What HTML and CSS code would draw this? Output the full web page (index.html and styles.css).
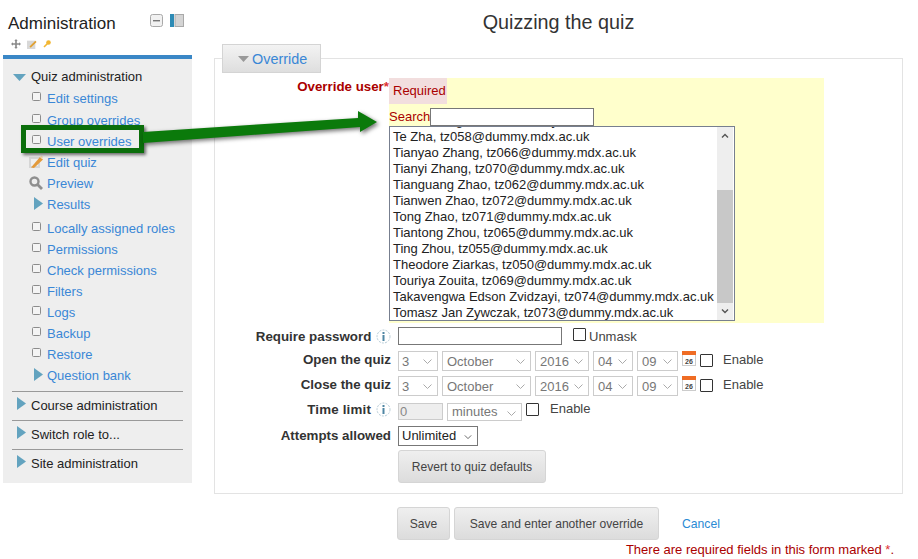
FILE: index.html
```html
<!DOCTYPE html>
<html lang="en">
<head>
<meta charset="utf-8">
<title>Quizzing the quiz</title>
<link rel="stylesheet" href="styles.css">
</head>
<body>
<svg width="0" height="0" class="defs">
  <defs>
    <symbol id="sq" viewBox="0 0 9 9"><rect x=".5" y=".5" width="8" height="8" rx="1" fill="#f4f4f4" stroke="#8c8c8c"/></symbol>
    <symbol id="tri-r" viewBox="0 0 9 13"><path d="M0 0L9 6.500L0 13Z" fill="#63a3bf"/></symbol>
    <symbol id="tri-d" viewBox="0 0 13 7"><path d="M0 0H13L6.500 7Z" fill="#63a3bf"/></symbol>
    <symbol id="chev" viewBox="0 0 9 5"><path d="M.5 .5L4.500 4.500L8.500 .5" fill="none" stroke="currentColor" stroke-width="1"/></symbol>
    <symbol id="cal" viewBox="0 0 14 15"><rect x=".5" y=".5" width="13" height="14" fill="#fff" stroke="#ccc"/><rect width="14" height="4" fill="#ef6c24"/><text x="7" y="12.500" font-size="7" font-weight="700" text-anchor="middle" font-family="Liberation Sans" fill="#444">26</text></symbol>
    <symbol id="info" viewBox="0 0 15 15"><circle cx="7.500" cy="7.500" r="6.500" fill="#fff" stroke="#b5cbd6" stroke-dasharray="2 1.200"/><rect x="6.500" y="3" width="2" height="2" fill="#4f86a3"/><rect x="6.500" y="6" width="2" height="6" fill="#4f86a3"/></symbol>
  </defs>
</svg>
<div class="page">
  <aside class="side">
    <div class="side-head">
      <div class="side-top">
        <h2 class="side-title">Administration</h2>
        <div class="dock">
          <svg class="dock-min" viewBox="0 0 13 13"><rect x=".5" y=".5" width="12" height="12" rx="2" fill="#f1f1f1" stroke="#a9a9a9"/><rect x="3" y="6" width="7" height="1.400" fill="#777"/></svg>
          <svg class="dock-col" viewBox="0 0 14 13"><rect x="0" y="0" width="4" height="13" fill="#2d8bb5"/><rect x="5" y=".5" width="8.500" height="12" fill="#d4d4d4" stroke="#a9a9a9"/></svg>
        </div>
      </div>
      <div class="side-tools">
        <svg class="tool" viewBox="0 0 12 12"><path d="M6 0L8 2.400H7V5H9.600V4L12 6L9.600 8V7H7V9.600H8L6 12L4 9.600H5V7H2.400V8L0 6L2.400 4V5H5V2.400H4Z" fill="#8a8a8a"/></svg>
        <svg class="tool" viewBox="0 0 12 12"><rect x="0" y="2" width="10" height="10" fill="#d8d8d8"/><path d="M3 9L10 2L11.500 3.500L4.500 10.500Z" fill="#e0a030"/></svg>
        <svg class="tool tool-key" viewBox="0 0 8 8"><circle cx="5.500" cy="2.500" r="2.300" fill="#f2b632"/><path d="M4.500 3.500L1 7" stroke="#f2b632" stroke-width="1.600"/></svg>
      </div>
    </div>
    <div class="side-body">
      <div class="top-item first"><svg class="ic-d"><use href="#tri-d"/></svg>Quiz administration</div>
      <ul class="tree">
        <li class="wide"><svg class="ic-sq"><use href="#sq"/></svg><a href="#">Edit settings</a></li>
        <li><svg class="ic-sq"><use href="#sq"/></svg><a href="#">Group overrides</a></li>
        <li><svg class="ic-sq"><use href="#sq"/></svg><a href="#">User overrides</a></li>
        <li><svg class="ic-big" viewBox="0 0 14 14"><rect x="0" y="2" width="11" height="11" fill="#d6d6d6"/><rect x="2" y="4" width="7" height="7" fill="#efefef"/><path d="M2 12.500L11 2L14 4.500L5 13Z" fill="#e39a3b"/><path d="M11 2L12.500 .5L14 2L13 4Z" fill="#f3dcae"/></svg><a href="#">Edit quiz</a></li>
        <li><svg class="ic-big" viewBox="0 0 14 14"><circle cx="5.500" cy="5.500" r="4" fill="none" stroke="#8f8f8f" stroke-width="2.400"/><path d="M8.500 8.500L13 13" stroke="#8f8f8f" stroke-width="2.800"/></svg><a href="#">Preview</a></li>
        <li class="after-gap"><svg class="ic-r"><use href="#tri-r"/></svg><a href="#">Results</a></li>
        <li><svg class="ic-sq"><use href="#sq"/></svg><a href="#">Locally assigned roles</a></li>
        <li><svg class="ic-sq"><use href="#sq"/></svg><a href="#">Permissions</a></li>
        <li><svg class="ic-sq"><use href="#sq"/></svg><a href="#">Check permissions</a></li>
        <li><svg class="ic-sq"><use href="#sq"/></svg><a href="#">Filters</a></li>
        <li><svg class="ic-sq"><use href="#sq"/></svg><a href="#">Logs</a></li>
        <li><svg class="ic-sq"><use href="#sq"/></svg><a href="#">Backup</a></li>
        <li><svg class="ic-sq"><use href="#sq"/></svg><a href="#">Restore</a></li>
        <li><svg class="ic-r"><use href="#tri-r"/></svg><a href="#">Question bank</a></li>
      </ul>
      <div class="top-item ruled"><svg class="ic-r2"><use href="#tri-r"/></svg>Course administration</div>
      <div class="top-item ruled"><svg class="ic-r2"><use href="#tri-r"/></svg>Switch role to...</div>
      <div class="top-item ruled"><svg class="ic-r2"><use href="#tri-r"/></svg>Site administration</div>
    </div>
  </aside>

  <main class="main">
    <h1 class="title">Quizzing the quiz</h1>
    <form class="form">
      <fieldset class="fs">
        <legend class="legend"><svg class="leg-tri" viewBox="0 0 11 6"><path d="M0 0H11L5.500 6Z" fill="#999"/></svg><a href="#">Override</a></legend>

        <div class="user-row">
          <div class="user-label">Override user<span class="star">*</span></div>
          <div class="user-box">
            <div class="req">Required</div>
            <div class="search"><label class="search-lab">Search</label><input class="search-in" type="text"></div>
            <div class="listbox">
              <div class="list-items">
                <div>Zhao Zhang, tz067@dummy.mdx.ac.uk</div>
                <div>Te Zha, tz058@dummy.mdx.ac.uk</div>
                <div>Tianyao Zhang, tz066@dummy.mdx.ac.uk</div>
                <div>Tianyi Zhang, tz070@dummy.mdx.ac.uk</div>
                <div>Tianguang Zhao, tz062@dummy.mdx.ac.uk</div>
                <div>Tianwen Zhao, tz072@dummy.mdx.ac.uk</div>
                <div>Tong Zhao, tz071@dummy.mdx.ac.uk</div>
                <div>Tiantong Zhou, tz065@dummy.mdx.ac.uk</div>
                <div>Ting Zhou, tz055@dummy.mdx.ac.uk</div>
                <div>Theodore Ziarkas, tz050@dummy.mdx.ac.uk</div>
                <div>Touriya Zouita, tz069@dummy.mdx.ac.uk</div>
                <div>Takavengwa Edson Zvidzayi, tz074@dummy.mdx.ac.uk</div>
                <div>Tomasz Jan Zywczak, tz073@dummy.mdx.ac.uk</div>
              </div>
              <div class="sbar">
                <svg class="sb-arrow" viewBox="0 0 8 5"><path d="M1 4.500L4 1.500L7 4.500" fill="none" stroke="#555" stroke-width="1.400"/></svg>
                <div class="sb-track"><div class="sb-thumb"></div></div>
                <svg class="sb-arrow" viewBox="0 0 8 5"><path d="M1 .5L4 3.500L7 .5" fill="none" stroke="#555" stroke-width="1.400"/></svg>
              </div>
            </div>
          </div>
        </div>

        <div class="row row-pass">
          <div class="lab">Require password <svg class="info"><use href="#info"/></svg></div>
          <div class="ctrl">
            <input class="pass" type="text">
            <span class="cb cb-un"></span><span class="unmask">Unmask</span>
          </div>
        </div>

        <div class="row row-date">
          <div class="lab">Open the quiz</div>
          <div class="ctrl">
            <span class="sel s-d">3<svg class="ch"><use href="#chev"/></svg></span>
            <span class="sel s-m">October<svg class="ch"><use href="#chev"/></svg></span>
            <span class="sel s-y">2016<svg class="ch"><use href="#chev"/></svg></span>
            <span class="sel s-h">04<svg class="ch"><use href="#chev"/></svg></span>
            <span class="sel s-i">09<svg class="ch"><use href="#chev"/></svg></span>
            <svg class="cal"><use href="#cal"/></svg>
            <span class="cb cb-en"></span><span class="enable">Enable</span>
          </div>
        </div>

        <div class="row row-date">
          <div class="lab">Close the quiz</div>
          <div class="ctrl">
            <span class="sel s-d">3<svg class="ch"><use href="#chev"/></svg></span>
            <span class="sel s-m">October<svg class="ch"><use href="#chev"/></svg></span>
            <span class="sel s-y">2016<svg class="ch"><use href="#chev"/></svg></span>
            <span class="sel s-h">04<svg class="ch"><use href="#chev"/></svg></span>
            <span class="sel s-i">09<svg class="ch"><use href="#chev"/></svg></span>
            <svg class="cal"><use href="#cal"/></svg>
            <span class="cb cb-en"></span><span class="enable">Enable</span>
          </div>
        </div>

        <div class="row row-time">
          <div class="lab">Time limit <svg class="info"><use href="#info"/></svg></div>
          <div class="ctrl">
            <span class="zero">0</span>
            <span class="sel s-min">minutes<svg class="ch"><use href="#chev"/></svg></span>
            <span class="cb cb-en"></span><span class="enable en-time">Enable</span>
          </div>
        </div>

        <div class="row row-att">
          <div class="lab">Attempts allowed</div>
          <div class="ctrl">
            <span class="sel s-att">Unlimited<svg class="ch ch-dark"><use href="#chev"/></svg></span>
          </div>
        </div>

        <div class="row row-rev">
          <button class="btn btn-rev" type="button">Revert to quiz defaults</button>
        </div>
      </fieldset>

      <div class="actions">
        <button class="btn btn-save" type="button">Save</button>
        <button class="btn btn-more" type="button">Save and enter another override</button>
        <a class="cancel" href="#">Cancel</a>
      </div>
      <div class="note">There are required fields in this form marked <span class="star">*</span>.</div>
    </form>
  </main>
</div>

<div class="hl"></div>
<svg class="arrow" width="260" height="50" viewBox="0 0 260 50">
  <path d="M2 26L217 12V5L236 16L219 26V21L2 37Z" fill="#0b7a0b"/>
</svg>
</body>
</html>
```
FILE: styles.css
```css
* { box-sizing: border-box; }
html, body { margin: 0; padding: 0; }
body {
  position: relative;
  width: 918px;
  height: 559px;
  overflow: hidden;
  background: #fff;
  color: #333;
  font-family: "Liberation Sans", Arial, sans-serif;
  font-size: 13px;
}
a { color: #3a87d6; text-decoration: none; }
.defs { position: absolute; }
.page { display: flex; align-items: flex-start; }

/* sidebar */
.side { width: 189px; margin-left: 3px; flex: none; }
.side-head { height: 55px; padding: 14px 0 0 5px; }
.side-top { display: flex; justify-content: space-between; }
.side-title { margin: 0; font-size: 17px; line-height: 20px; font-weight: 400; color: #222; }
.dock { display: flex; gap: 7px; padding-right: 8px; }
.dock-min { width: 13px; height: 13px; }
.dock-col { width: 14px; height: 13px; }
.side-tools { display: flex; gap: 6px; margin: 5px 0 0 3px; }
.tool { width: 10px; height: 10px; }
.tool-key { width: 8px; height: 8px; margin-top: 1px; }
.side-body {
  border-top: 4px solid #3a87c6;
  background: #eee;
  height: 428px;
  padding: 8px 9px 0;
}
.top-item { position: relative; height: 20px; line-height: 20px; padding-left: 19px; color: #222; }
.top-item.first { margin-bottom: 1px; }
.top-item.ruled { border-top: 1px solid #999; height: 29px; padding-top: 4px; }
.ic-d { position: absolute; left: 1px; top: 7px; width: 13px; height: 7px; }
.ic-r2 { position: absolute; left: 5px; top: 5px; width: 9px; height: 13px; }
.tree { list-style: none; margin: 0 0 5px; padding: 0; }
.tree li { position: relative; height: 21px; line-height: 21px; padding-left: 35px; }
.tree li.wide { height: 22px; }
.tree li.after-gap { height: 24px; }
.ic-sq { position: absolute; left: 20px; top: 4px; width: 9px; height: 9px; }
.ic-big { position: absolute; left: 17px; top: 3px; width: 14px; height: 14px; }
.ic-r { position: absolute; left: 22px; top: 3px; width: 9px; height: 13px; }

/* main */
.main { width: 689px; margin-left: 22px; flex: none; }
.title { margin: 0; height: 44px; padding-top: 11px; text-align: center; font-size: 19.8px; line-height: 23px; font-weight: 400; color: #333; }
.fs { margin: 0; padding: 5px 0 0; border: 1px solid #e3e3e3; height: 450px; min-width: 0; }
.legend { display: flex; align-items: center; margin-left: 7px; padding: 0 0 0 15px; width: 99px; height: 29px; background: linear-gradient(#f3f3f3, #dedede); border: 1px solid #d4d4d4; font-size: 14.4px; }
.leg-tri { width: 11px; height: 6px; margin-right: 3px; }

.user-row { display: flex; }
.user-label { width: 174px; padding: 1px 0 0; text-align: right; font-weight: 700; font-size: 13.33px; color: #a00; line-height: 15px; }
.star { color: #d33; }
.user-box { width: 435px; height: 245px; background: #ffc; color: #a00; }
.req { display: inline-block; vertical-align: top; height: 26px; line-height: 26px; padding: 0 1px 0 4px; background: #f2dede; }
.search { display: flex; align-items: center; height: 19px; margin-top: 3px; }
.search-lab { width: 41px; line-height: 19px; }
.search-in { width: 164px; height: 18px; border: 1px solid #777; background: #fff; margin: 0; padding: 0; }
.listbox { display: flex; width: 346px; height: 195px; border: 1px solid #777f8f; background: #fff; color: #222; overflow: hidden; }
.list-items { flex: 1; padding: 0 0 0 3px; margin-top: -14px; line-height: 16px; white-space: nowrap; overflow: hidden; }
.list-items div { height: 16px; }
.sbar { width: 17px; flex: none; display: flex; flex-direction: column; align-items: center; background: #eee; border-right: 1px solid #fff; }
.sb-arrow { width: 8px; height: 5px; flex: none; margin: 6px 0; }
.sb-track { flex: 1; width: 100%; padding-top: 46px; }
.sb-thumb { height: 113px; background: #c8c8c8; }

.row { display: flex; align-items: flex-start; }
.lab { width: 176px; text-align: right; font-weight: 700; font-size: 13.33px; color: #333; line-height: 16px; white-space: nowrap; }
.ctrl { display: flex; align-items: flex-start; margin-left: 7px; }
.info { width: 15px; height: 15px; vertical-align: -3px; margin-left: 1px; }
.row-pass { margin-top: 4px; height: 24px; }
.row-pass .lab { padding-top: 2px; }
.pass { width: 164px; height: 18px; margin: 0; padding: 0; border: 1px solid #777; background: #fff; }
.cb { display: block; flex: none; width: 13px; height: 13px; border: 1px solid #333; background: #fff; border-radius: 1px; }
.cb-un { margin: 1px 3px 0 11px; }
.unmask { color: #444; line-height: 18px; padding-top: 1px; }

.row-date { height: 25px; }
.row-date .lab { padding-top: 1px; }
.sel { position: relative; display: block; flex: none; height: 20px; border: 1px solid #ccc; background: #fff; color: #777; line-height: 19px; padding-left: 3px; margin-right: 4px; }
.ch { position: absolute; right: 5px; top: 7px; width: 9px; height: 5px; color: #aaa; }
.s-d { width: 40px; }
.s-m { width: 89px; padding-left: 4px; }
.s-y { width: 54px; padding-left: 4px; }
.s-h { width: 40px; padding-left: 4px; }
.s-i { width: 41px; padding-left: 4px; }
.cal { width: 14px; height: 15px; flex: none; }
.cb-en { margin: 3px 10px 0 4px; }
.enable { color: #444; line-height: 18px; }

.row-time { margin-top: 2px; height: 23px; }
.row-time .lab { margin-top: -1px; letter-spacing: .2px; }
.zero { display: block; width: 45px; height: 17px; background: #eee; border: 1px solid #ccc; line-height: 16px; padding-left: 1px; color: #888; margin-right: 4px; }
.s-min { width: 75px; height: 18px; line-height: 15px; padding-left: 4px; }
.row-time .cb-en { margin: 0 11px 0 0; }
.en-time { line-height: 12px; }

.row-att { height: 24px; }
.row-att .lab { padding-top: 2px; }
.s-att { width: 80px; border-color: #777; color: #222; padding-left: 3px; margin: 0; line-height: 17px; }
.ch-dark { right: 5px; top: 8px; width: 8px; height: 4px; color: #444; }

.row-rev { margin: 0 0 0 183px; }
.btn { height: 33px; margin: 0; padding: 0; border: 1px solid #d5d5d5; border-radius: 3px; background: linear-gradient(#efefef, #dcdcdc); color: #444; font-family: inherit; font-size: 12.1px; }
.btn-rev { width: 148px; }

.actions { display: flex; align-items: center; margin-top: 13px; padding-left: 183px; }
.btn-save { width: 53px; margin-right: 4px; }
.btn-more { width: 205px; margin-right: 23px; }
.cancel { color: #2a8ad4; font-size: 12.2px; }
.note { margin-top: 2px; width: 680px; text-align: right; color: #a00; font-size: 13px; line-height: 15px; }

/* annotation overlays */
.hl { position: absolute; left: 21px; top: 125px; width: 123px; height: 28px; border: 5px solid #0b6e0b; box-shadow: 2px 2px 3px rgba(0,0,0,.55); }
.arrow { position: absolute; left: 141px; top: 106px; filter: drop-shadow(2px 2px 2px rgba(0,0,0,.55)); }
```
